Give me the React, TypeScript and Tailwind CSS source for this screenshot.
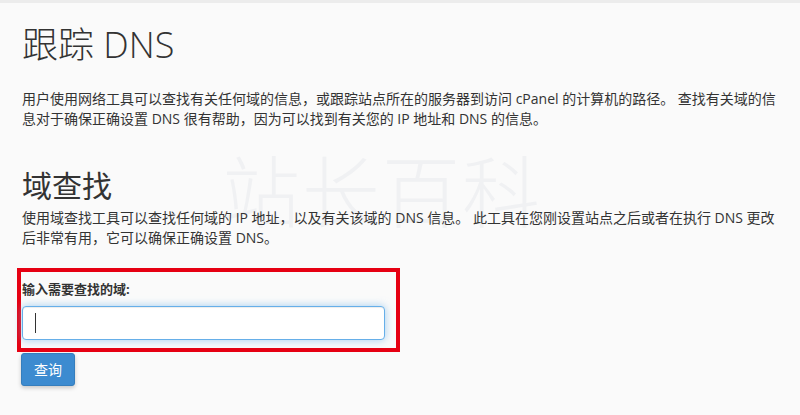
import React from "react";

const font = { fontFamily: '"Open Sans", "Noto Sans CJK SC", sans-serif' };

export default function App() {
  return (
    <div
      style={font}
      className="relative w-[800px] h-[415px] overflow-hidden bg-[#fafafa] text-[#333] border-t-[3px] border-[#ececec]"
    >
      {/* watermark */}
      <div className="absolute left-[222px] top-[150px] text-[78px] leading-none tracking-[2px] font-light text-[#f0f1f3] select-none pointer-events-none">
        站长百科
      </div>

      <div className="relative pl-[22px] pr-[20px]">
        <h1 className="mt-[22px] text-[36px] leading-[40px] font-light">跟踪 DNS</h1>

        <p className="mt-[24px] text-[14px] leading-[20px]">
          用户使用网络工具可以查找有关任何域的信息，或跟踪站点所在的服务器到访问 cPanel 的计算机的路径。 查找有关域的信息对于确保正确设置 DNS 很有帮助，因为可以找到有关您的 IP 地址和 DNS 的信息。
        </p>

        <h2 className="mt-[40px] text-[30px] leading-[34px]">域查找</h2>

        <p className="mt-[5px] text-[14px] leading-[20px]">
          使用域查找工具可以查找任何域的 IP 地址，以及有关该域的 DNS 信息。 此工具在您刚设置站点之后或者在执行 DNS 更改后非常有用，它可以确保正确设置 DNS。
        </p>

        <div className="mt-[20px] -ml-[5px] w-[383px] border-[4px] border-[#e60012] pl-[1px] pt-[8px] pb-[8px]">
          <label className="block text-[13px] leading-[18px] font-bold text-[#333]">输入需要查找的域:</label>
          <div className="mt-[8px] w-[363px] h-[34px] rounded-[4px] bg-white border border-[#66afe9] shadow-[inset_0_1px_1px_rgba(0,0,0,0.075),0_0_8px_rgba(102,175,233,0.6)] flex items-center pl-[12px]">
            <span className="block w-px h-[20px] bg-[#333]" />
          </div>
        </div>

        <button className="mt-[1px] -ml-[1px] w-[54px] h-[33px] rounded-[3px] bg-[#3c8bd0] border border-[#357ebd] text-white text-[14px] shadow-[0_2px_4px_rgba(0,0,0,0.2)]">
          查询
        </button>
      </div>
    </div>
  );
}
